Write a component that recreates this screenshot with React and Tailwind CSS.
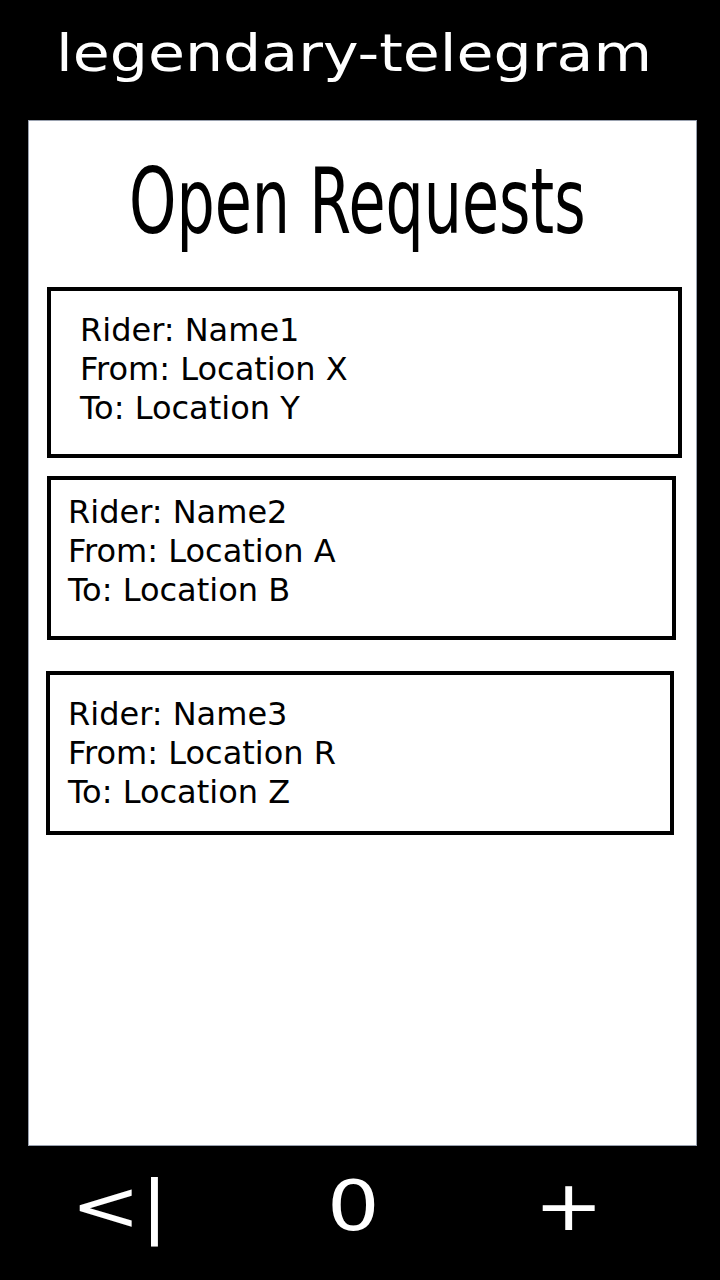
import React from "react";

/* ================= Data ================= */

const REQUESTS = [
  {
    rider: "Name1",
    from: "Location X",
    to: "Location Y",
    box: "ml-[18px] mt-[33px] w-[635px] h-[171px] pl-[29px] pt-[20px]",
  },
  {
    rider: "Name2",
    from: "Location A",
    to: "Location B",
    box: "ml-[18px] mt-[18px] w-[629px] h-[164px] pl-[17px] pt-[13px]",
  },
  {
    rider: "Name3",
    from: "Location R",
    to: "Location Z",
    box: "ml-[17px] mt-[31px] w-[628px] h-[164px] pl-[18px] pt-[20px]",
  },
];

const FONT = "font-['DejaVu_Sans',sans-serif]";

export default function App() {
  return (
    <div className={`w-[720px] h-[1280px] bg-black flex flex-col overflow-hidden ${FONT}`}>
      {/* ===== Header ===== */}
      <div className="h-[120px] pt-[24px] overflow-hidden">
        <span className="inline-block ml-[56px] origin-left scale-x-[1.18] text-white text-[51px] leading-[59px] whitespace-nowrap">
          legendary-telegram
        </span>
      </div>

      {/* ===== Panel ===== */}
      <div className="ml-[28px] w-[669px] h-[1026px] bg-white border border-gray-400 flex flex-col">
        <div className="h-[133px] pt-[28px] whitespace-nowrap overflow-hidden">
          <span className="inline-block ml-[100px] origin-left scale-x-[0.67] text-black text-[90px] leading-[105px]">
            Open Requests
          </span>
        </div>

        {REQUESTS.map((r) => (
          <RequestCard key={r.rider} {...r} />
        ))}
      </div>

      {/* ===== Footer ===== */}
      <div className="flex-1 flex items-center text-white text-[69px] leading-[80px] pb-[14px] whitespace-nowrap">
        <span className="ml-[71px] w-[256px]">
          <span className="inline-block origin-left scale-x-[1.2]">&lt;|</span>
        </span>
        <span className="w-[207px]">
          <span className="inline-block origin-left scale-x-[1.2]">0</span>
        </span>
        <span>
          <span className="inline-block origin-left scale-x-[1.2]">+</span>
        </span>
      </div>
    </div>
  );
}

/* ================= Components ================= */

function RequestCard({ rider, from, to, box }) {
  return (
    <div className={`border-4 border-black text-black text-[32px] leading-[39px] ${box}`}>
      <div>Rider: {rider}</div>
      <div>From: {from}</div>
      <div>To: {to}</div>
    </div>
  );
}
